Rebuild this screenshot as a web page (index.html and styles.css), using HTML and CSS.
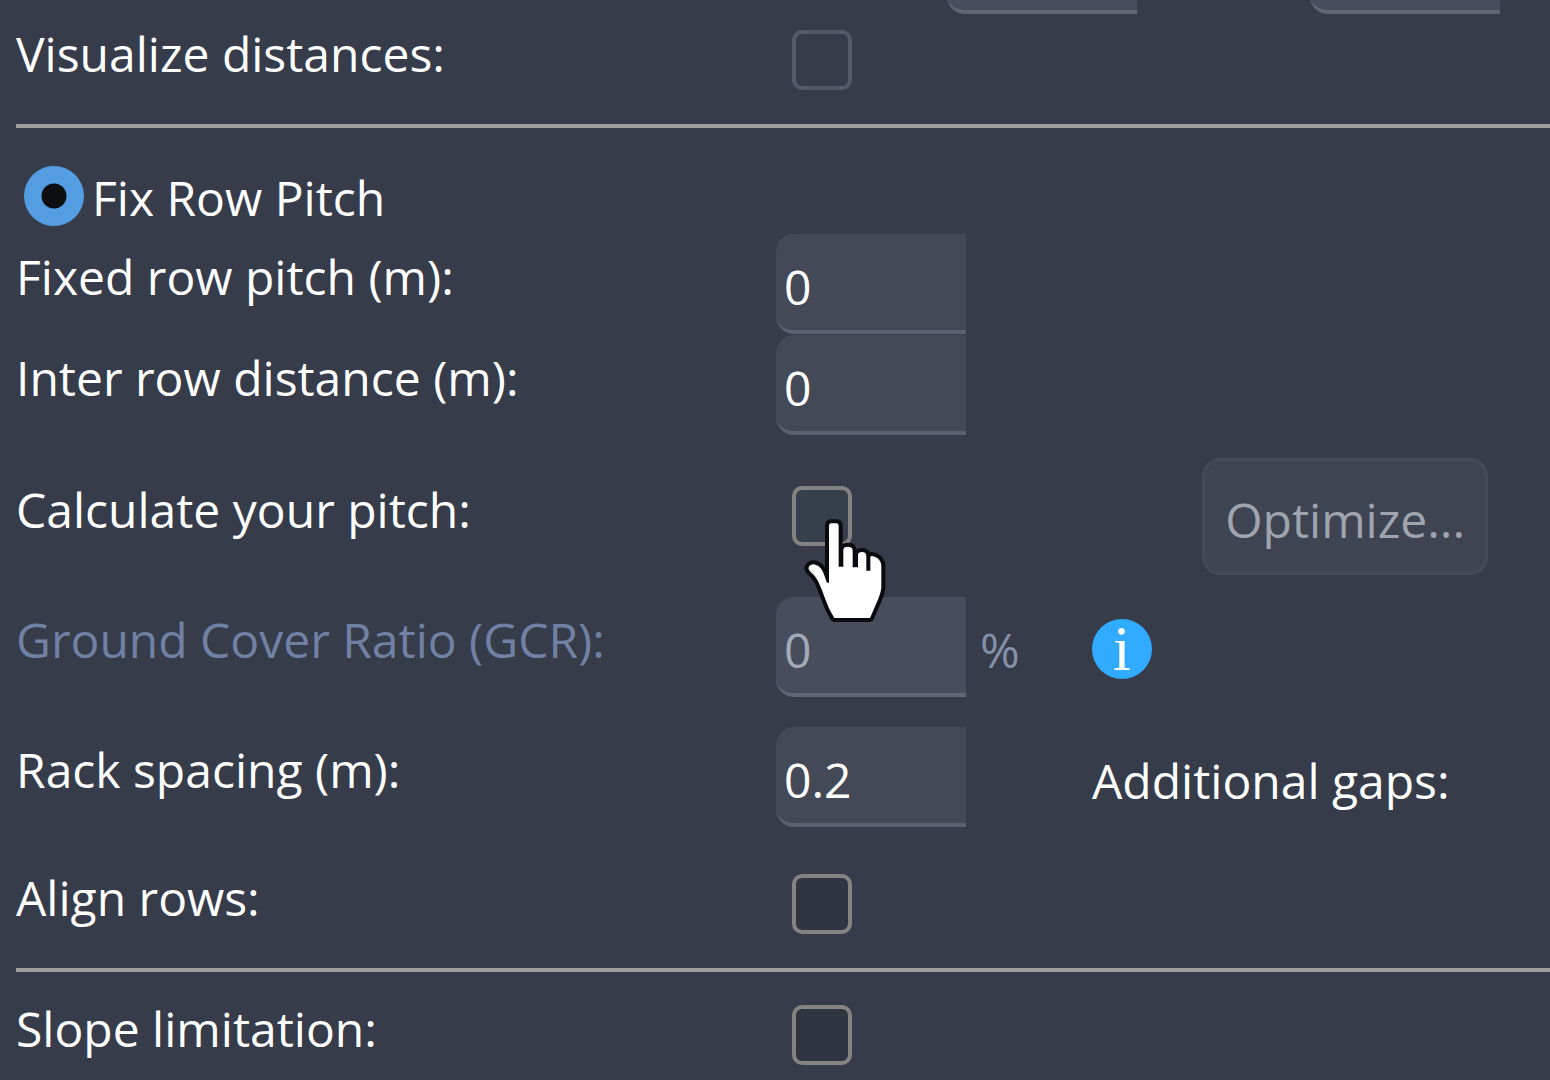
FILE: index.html
```html
<!DOCTYPE html>
<html lang="en">
<head>
<meta charset="utf-8">
<title>Row pitch settings</title>
<link rel="stylesheet" href="styles.css">
</head>
<body>
<form class="panel">
  <div class="previous-row">
    <input class="field" type="text" aria-label="Horizontal distance" disabled>
    <input class="field" type="text" aria-label="Vertical distance" disabled>
  </div>

  <div class="row row-first">
    <label class="label" for="visualize">Visualize distances:</label>
    <div class="tick"><input class="box box-faint" type="checkbox" id="visualize"></div>
  </div>

  <hr class="rule">

  <div class="option">
    <input class="radio" type="radio" id="fix-pitch" name="mode" checked>
    <label class="option-label" for="fix-pitch">Fix Row Pitch</label>
  </div>

  <div class="fields">
    <div class="row">
      <label class="label label-field" for="pitch">Fixed row pitch (m):</label>
      <input class="field" type="text" id="pitch" value="0">
    </div>
    <div class="row">
      <label class="label label-field" for="distance">Inter row distance (m):</label>
      <input class="field" type="text" id="distance" value="0">
    </div>
  </div>

  <div class="row row-calculate">
    <label class="label label-calculate" for="calculate">Calculate your pitch:</label>
    <div class="tick tick-calculate">
      <input class="box box-hover" type="checkbox" id="calculate">
      <svg class="pointer" viewBox="132 174 252 324" aria-hidden="true">
        <path d="M207 197Q207 190 214 190H229Q236 190 236 197V320H250V270Q250 260 263 260Q278 260 278 272V322H294V286Q294 276 306 276Q319 276 319 288V332H331V290Q334 286 344 290Q364 298 364 318V384Q362 400 355 416L330 474H223Q206 448 196 418Q186 388 174 363Q164 345 149 333Q143 326 148 318Q156 310 168 315Q181 318 190 338L201 368H207Z"/>
      </svg>
    </div>
    <button class="optimize" type="button" disabled>Optimize...</button>
  </div>

  <div class="row row-ratio">
    <label class="label label-field muted" for="gcr">Ground Cover Ratio (GCR):</label>
    <div class="measure">
      <input class="field" type="text" id="gcr" value="0" disabled>
      <span class="unit">%</span>
    </div>
    <span class="info">i</span>
  </div>

  <div class="row row-spacing">
    <label class="label label-field" for="spacing">Rack spacing (m):</label>
    <input class="field" type="text" id="spacing" value="0.2">
    <span class="gaps">Additional gaps:</span>
  </div>

  <div class="row row-align">
    <label class="label" for="align">Align rows:</label>
    <div class="tick"><input class="box" type="checkbox" id="align"></div>
  </div>

  <hr class="rule">

  <div class="row row-slope">
    <label class="label" for="slope">Slope limitation:</label>
    <div class="tick"><input class="box" type="checkbox" id="slope"></div>
  </div>
</form>
</body>
</html>
```
FILE: styles.css
```css
* {
  box-sizing: border-box;
}

body {
  margin: 0;
  background: #363c4a;
  color: #fff;
  font: 48px/60px "Open Sans", "Noto Sans", sans-serif;
}

.panel {
  padding: 0 0 14px 16px;
}

input,
button {
  margin: 0;
  font: inherit;
  color: inherit;
}

.previous-row {
  display: grid;
  grid-template-columns: 931fr 363fr 240fr;
  align-content: end;
  height: 14px;
  overflow: hidden;
}

.previous-row .field:first-child {
  grid-column: 2;
}

.row {
  display: grid;
  grid-template-columns: 760fr 316fr 458fr;
  align-items: start;
}

.row-first {
  padding-top: 8px;
}

.label {
  padding-top: 2px;
  white-space: nowrap;
}

.label-field {
  padding-top: 13px;
}

.label-calculate {
  padding-top: 22px;
}

.muted {
  color: #7081a4;
}

.field {
  display: block;
  width: 190px;
  height: 100px;
  padding: 8px 8px 0;
  border: 0;
  border-bottom: 4px solid #5a606f;
  border-radius: 18px 0 0 18px;
  background: #434957;
}

.field:disabled {
  background: #474d5c;
  border-bottom-color: #5f6674;
  color: #a3abb9;
}

.tick {
  position: relative;
  display: flex;
  padding: 8px 0 0 16px;
}

.tick-calculate {
  padding-top: 28px;
}

.box {
  appearance: none;
  width: 60px;
  height: 60px;
  border: 4px solid #838382;
  border-radius: 10px;
  background: #2f3541;
}

.box-hover {
  background: #363f4b;
}

.box-faint {
  border-color: #535a69;
  background: #363c4a;
}

.pointer {
  position: absolute;
  top: 60px;
  left: 28px;
  width: 84px;
  height: 108px;
}

.pointer path {
  fill: #fff;
  stroke: #090b0e;
  stroke-width: 24;
  stroke-linejoin: round;
  paint-order: stroke;
}

.rule {
  height: 4px;
  margin: 34px 0 0;
  border: 0;
  background: #a09fa0;
}

.option {
  display: flex;
  align-items: start;
  gap: 8px;
  padding: 38px 0 8px 8px;
  height: 106px;
}

.option-label {
  padding-top: 2px;
}

.radio {
  appearance: none;
  width: 60px;
  height: 60px;
  border-radius: 50%;
  background: radial-gradient(circle, #0c0e11 12px, #559de2 13px);
}

.fields {
  display: grid;
  gap: 1px;
}

.row-calculate {
  padding-top: 23px;
}

.optimize {
  justify-self: end;
  height: 117px;
  margin-right: 62px;
  padding: 6px 20px 0;
  border: 3px solid #444a58;
  border-radius: 18px;
  background: #3e4452;
  color: #9fa4ae;
}

.row-ratio {
  padding-top: 22px;
}

.measure {
  display: flex;
  gap: 14px;
}

.unit {
  padding-top: 23px;
  color: #8490a8;
}

.info {
  width: 60px;
  height: 60px;
  margin-top: 22px;
  border-radius: 50%;
  background: #30abff;
  font: 64px/60px "Liberation Serif", serif;
  text-align: center;
}

.row-spacing {
  padding-top: 30px;
}

.gaps {
  padding-top: 24px;
  white-space: nowrap;
}

.row-align {
  padding-top: 39px;
}

.row-slope {
  padding-top: 25px;
}
```
